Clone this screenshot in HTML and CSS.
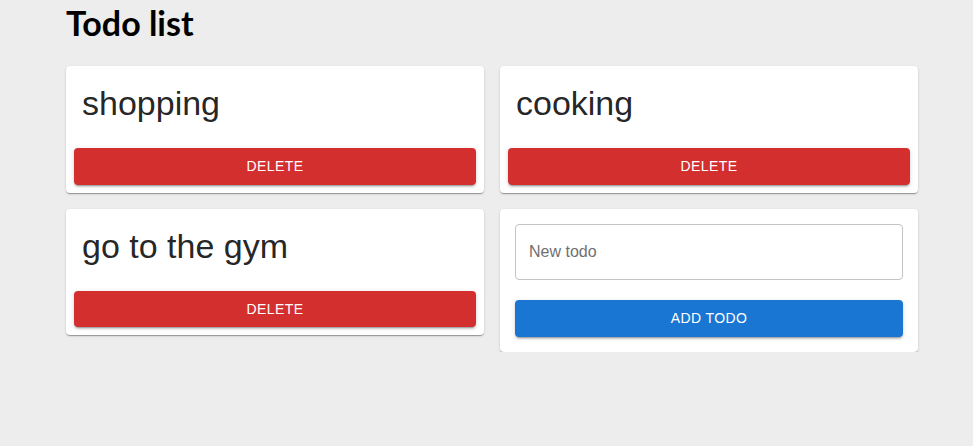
FILE: index.html
```html
<!DOCTYPE html>
<html>
<head>
<meta charset="utf-8">
<link rel="stylesheet" href="styles.css">
</head>
<body>
<div class="container">
  <h1 class="title">Todo list</h1>
  <div class="grid">
    <div class="card">
      <div class="card-content"><div class="todo-text">shopping</div></div>
      <div class="card-actions"><button class="btn btn-red">Delete</button></div>
    </div>
    <div class="card">
      <div class="card-content"><div class="todo-text">cooking</div></div>
      <div class="card-actions"><button class="btn btn-red">Delete</button></div>
    </div>
    <div class="card">
      <div class="card-content"><div class="todo-text">go to the gym</div></div>
      <div class="card-actions"><button class="btn btn-red">Delete</button></div>
    </div>
    <div class="card form-card">
      <input class="new-input" type="text" placeholder="New todo">
      <button class="btn btn-blue">Add todo</button>
    </div>
  </div>
</div>
</body>
</html>
```
FILE: styles.css
```css
html, body {
  margin: 0;
  padding: 0;
  background: #ededed;
}
.container {
  width: 852px;
  padding-left: 66px;
}
.title {
  margin: 0;
  height: 66px;
  padding-top: 3px;
  box-sizing: border-box;
  font-family: Lato, "Noto Sans", sans-serif;
  font-weight: 700;
  font-size: 34px;
  line-height: 40px;
  color: #000;
}
.grid {
  display: grid;
  grid-template-columns: 1fr 1fr;
  gap: 16px;
  align-items: start;
}
.card {
  background: #fff;
  border-radius: 4px;
  box-shadow: 0px 2px 1px -1px rgba(0,0,0,0.2), 0px 1px 1px 0px rgba(0,0,0,0.14), 0px 1px 3px 0px rgba(0,0,0,0.12);
}
.card-content {
  padding: 16px;
}
.todo-text {
  font-family: "Liberation Sans", Arial, sans-serif;
  font-size: 34px;
  line-height: 42px;
  color: rgba(0,0,0,0.87);
}
.card-actions {
  padding: 8px;
}
.btn {
  display: block;
  width: 100%;
  height: 36.5px;
  padding: 0;
  border: 0;
  border-radius: 4px;
  color: #fff;
  font-family: "Liberation Sans", Arial, sans-serif;
  font-size: 14px;
  letter-spacing: 0.4px;
  text-transform: uppercase;
  box-shadow: 0px 3px 1px -2px rgba(0,0,0,0.2), 0px 2px 2px 0px rgba(0,0,0,0.14), 0px 1px 5px 0px rgba(0,0,0,0.12);
  cursor: pointer;
}
.btn-red { background: #d32f2f; }
.btn-blue { background: #1976d2; }
.form-card {
  padding: 15px;
  display: flex;
  flex-direction: column;
  gap: 20.5px;
}
.new-input {
  box-sizing: border-box;
  height: 56px;
  width: 100%;
  border: 1px solid #c4c4c4;
  border-radius: 4px;
  padding: 0 13px;
  font-family: "Liberation Sans", Arial, sans-serif;
  font-size: 16px;
  color: rgba(0,0,0,0.87);
  outline: none;
}
.new-input::placeholder {
  color: #707070;
  opacity: 1;
}
```
